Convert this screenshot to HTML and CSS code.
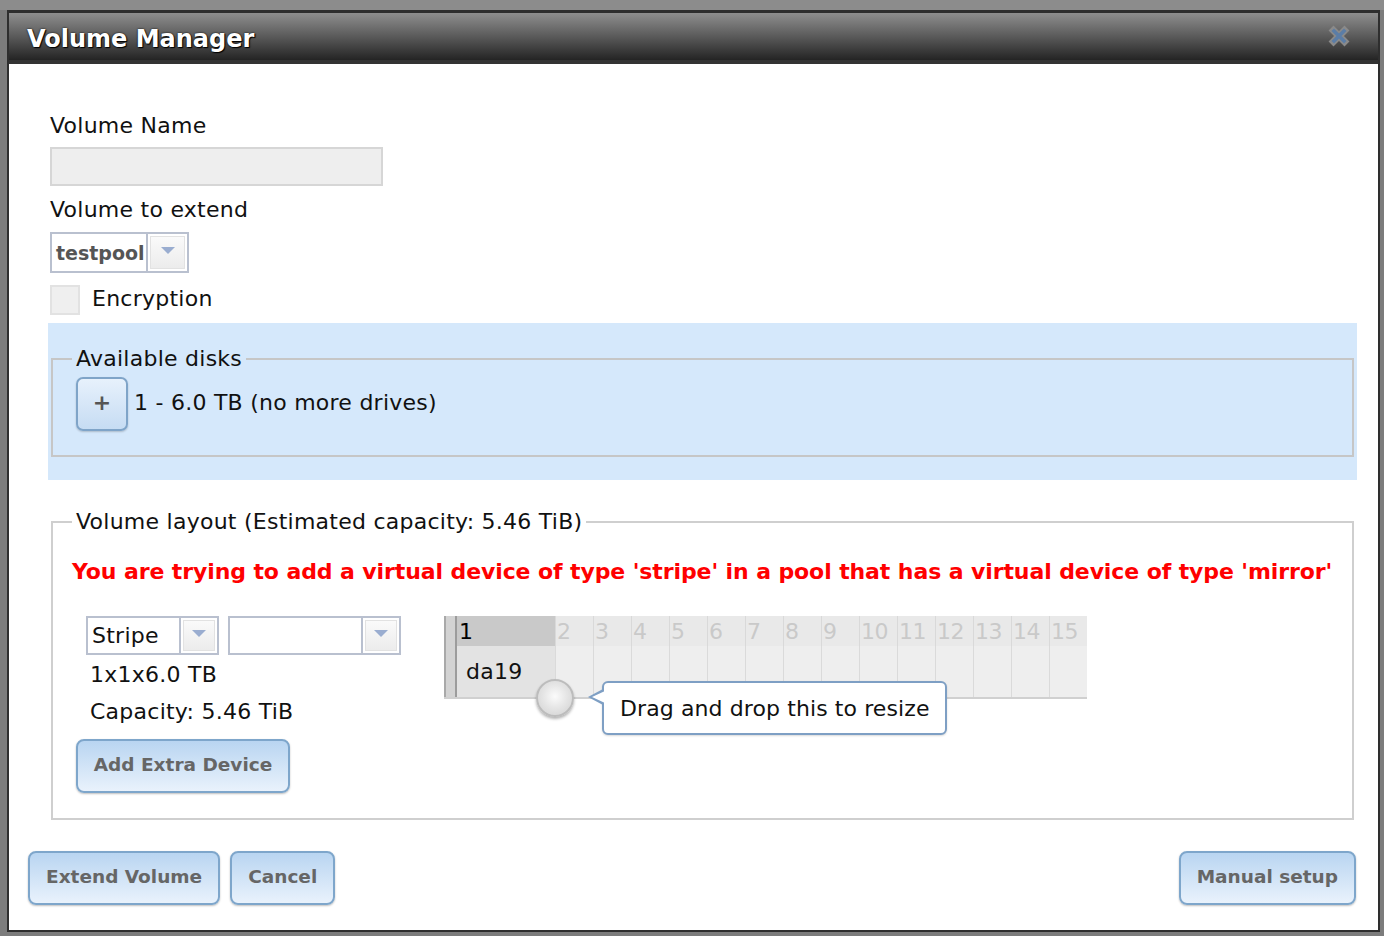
FILE: index.html
```html
<!DOCTYPE html>
<html>
<head>
<meta charset="utf-8">
<title>Volume Manager</title>
<link rel="stylesheet" href="styles.css">
</head>
<body>
<div class="backdrop">
  <div class="dialog">
    <div class="titlebar">
      <span class="title">Volume Manager</span>
      <svg class="close" width="22" height="22" viewBox="0 0 22 22">
        <path d="M5.5 5.5 L16.5 16.5 M16.5 5.5 L5.5 16.5" stroke="#8a8a8a" stroke-width="7" stroke-linecap="square"/>
        <path d="M6 6 L16 16 M16 6 L6 16" stroke="#5b7da6" stroke-width="3.5" stroke-linecap="square"/>
      </svg>
    </div>
    <div class="content">
      <div class="label first">Volume Name</div>
      <div class="textinput"></div>
      <div class="label">Volume to extend</div>
      <div class="select pool">
        <span class="sel-text bold">testpool</span>
        <span class="sel-arrow"><span class="arrow-box"><span class="tri"></span></span></span>
      </div>
      <div class="check-row">
        <span class="checkbox"></span>
        <span class="check-label">Encryption</span>
      </div>
    </div>

    <div class="disks-panel">
      <fieldset class="fs disks">
        <legend>Available disks</legend>
        <div class="disk-row">
          <span class="plus-btn">+</span>
          <span class="disk-text">1 - 6.0 TB (no more drives)</span>
        </div>
      </fieldset>
    </div>

    <div class="content">
      <fieldset class="fs layout">
        <legend>Volume layout (Estimated capacity: 5.46 TiB)</legend>
        <div class="warning">You are trying to add a virtual device of type 'stripe' in a pool that has a virtual device of type 'mirror'</div>
        <div class="layout-row">
          <div class="left-col">
            <div class="sel-pair">
              <div class="select stripe">
                <span class="sel-text">Stripe</span>
                <span class="sel-arrow"><span class="arrow-box"><span class="tri"></span></span></span>
              </div>
              <div class="select empty">
                <span class="sel-text"></span>
                <span class="sel-arrow"><span class="arrow-box"><span class="tri"></span></span></span>
              </div>
            </div>
            <div class="info">1x1x6.0 TB</div>
            <div class="info">Capacity: 5.46 TiB</div>
            <span class="btn extra">Add Extra Device</span>
          </div>
          <div class="grid-wrap">
            <div class="grid">
              <div class="grid-left"></div>
              <div class="grid-main">
                <div class="grid-head">
                  <span class="hc sel">1</span>
                  <span class="hc">2</span><span class="hc">3</span><span class="hc">4</span><span class="hc">5</span><span class="hc">6</span><span class="hc">7</span><span class="hc">8</span><span class="hc">9</span><span class="hc">10</span><span class="hc">11</span><span class="hc">12</span><span class="hc">13</span><span class="hc">14</span><span class="hc">15</span>
                </div>
                <div class="grid-body">
                  <span class="bc sel">da19</span>
                  <span class="bc"></span><span class="bc"></span><span class="bc"></span><span class="bc"></span><span class="bc"></span><span class="bc"></span><span class="bc"></span><span class="bc"></span><span class="bc"></span><span class="bc"></span><span class="bc"></span><span class="bc"></span><span class="bc"></span><span class="bc"></span>
                </div>
              </div>
            </div>
            <span class="knob"></span>
            <div class="tooltip">Drag and drop this to resize</div>
          </div>
        </div>
      </fieldset>
    </div>

    <div class="actions">
      <div class="actions-left">
        <span class="btn">Extend Volume</span>
        <span class="btn">Cancel</span>
      </div>
      <span class="btn">Manual setup</span>
    </div>
  </div>
</div>
</body>
</html>
```

FILE: styles.css
```css
html, body {
  margin: 0;
  padding: 0;
}
body {
  background: #7f7f7f;
  font-family: "DejaVu Sans", Verdana, sans-serif;
  font-size: 22px;
  letter-spacing: 0.25px;
  color: #111;
  width: 1384px;
  height: 936px;
  overflow: hidden;
}
.backdrop {
  padding: 10px 4px 0 7px;
  background: linear-gradient(#8c8c8c 0, #8c8c8c 10px, #7c7c7c 10px);
  height: 936px;
  box-sizing: border-box;
}
.dialog {
  width: 1373px;
  height: 922px;
  box-sizing: border-box;
  border: 2px solid #2e2e2e;
  border-top-width: 3px;
  background: #fff;
}
.titlebar {
  border-bottom: 4px solid #333;
  background: linear-gradient(#8e8e8e, #5a5a5a 50%, #242424);
  display: flex;
  align-items: center;
  justify-content: space-between;
  padding: 4px 28px 0 18px;
  box-sizing: border-box;
  height: 51px;
}
.title {
  color: #fff;
  font-weight: bold;
  font-size: 24px;
  letter-spacing: 0;
  text-shadow: 0 0 2px #000, 1px 1px 1px #000;
}
.close {
  display: block;
  margin-top: -6px;
}
.content {
  padding: 0 22px 0 39px;
}
.label {
  line-height: 28px;
  padding-left: 2px;
}
.label.first {
  margin-top: 48px;
}
.textinput {
  margin: 7px 0 10px 2px;
  width: 329px;
  height: 35px;
  background: #eee;
  border: 2px solid #d6d6d6;
}
.select {
  display: flex;
  border: 2px solid #b9c0cf;
  background: #fff;
  box-sizing: border-box;
}
.select.pool {
  margin: 8px 0 0 2px;
  width: 139px;
  height: 41px;
}
.sel-text {
  flex: 1;
  display: flex;
  align-items: center;
  padding-left: 4px;
  color: #111;
}
.sel-text.bold {
  font-weight: bold;
  color: #555;
  font-size: 19px;
  letter-spacing: 0;
}
.sel-arrow {
  border-left: 2px solid #b9c0cf;
  width: 38px;
  padding: 2px;
  box-sizing: border-box;
  display: flex;
}
.pool .sel-arrow {
  width: 41px;
}
.arrow-box {
  flex: 1;
  background: linear-gradient(#fafafa, #ececec);
  border: 1px solid #e2e2e2;
  display: flex;
  align-items: center;
  justify-content: center;
}
.tri {
  width: 0;
  height: 0;
  border-left: 7px solid transparent;
  border-right: 7px solid transparent;
  border-top: 7px solid #9aadd0;
  margin-top: -4px;
}
.check-row {
  display: flex;
  align-items: center;
  margin: 12px 0 8px 2px;
}
.checkbox {
  width: 26px;
  height: 26px;
  background: #efefef;
  border: 2px solid #e2e2e2;
}
.check-label {
  margin-left: 12px;
  margin-top: -4px;
}
.disks-panel {
  margin: 0 21px 0 39px;
  background: #d5e8fb;
  padding: 22px 1px 21px 1px;
  height: 157px;
  box-sizing: border-box;
}
.fs {
  margin: 0;
  border: 2px solid #c6c6c6;
  padding: 0 19px 0 19px;
  min-width: 0;
}
.fs legend {
  padding: 0 4px;
  line-height: 28px;
}
.disks {
  margin-left: 2px;
  margin-right: 2px;
  padding-bottom: 24px;
}
.disk-row {
  display: flex;
  align-items: center;
  margin-top: 4px;
}
.plus-btn {
  margin-left: 4px;
  width: 52px;
  height: 54px;
  box-sizing: border-box;
  border: 2px solid #7fa4c8;
  border-radius: 7px;
  background: linear-gradient(#e7f1fc, #c6dcf3);
  display: flex;
  align-items: center;
  justify-content: center;
  padding-bottom: 3px;
  color: #555;
  font-size: 22px;
  font-weight: bold;
  box-shadow: 0 1px 2px rgba(0,0,0,0.2);
}
.disk-text {
  margin-left: 6px;
  margin-top: -3px;
}
.layout {
  margin: 28px 2px 0 3px;
  padding-bottom: 25px;
  border-color: #cfcfcf;
}
.warning {
  color: #f00;
  font-weight: bold;
  font-size: 22px;
  letter-spacing: -0.1px;
  line-height: 28px;
  margin-top: 22px;
  white-space: nowrap;
}
.layout-row {
  display: flex;
  margin-top: 30px;
}
.left-col {
  margin-left: 4px;
  width: 368px;
}
.sel-pair {
  display: flex;
  gap: 9px;
  margin-left: 10px;
}
.select.stripe {
  width: 133px;
  height: 39px;
}
.select.empty {
  width: 173px;
  height: 39px;
}
.info {
  line-height: 28px;
  padding-left: 14px;
  margin-top: 6px;
}
.info + .info {
  margin-top: 9px;
}
.btn {
  display: inline-flex;
  align-items: center;
  justify-content: center;
  height: 54px;
  box-sizing: border-box;
  padding: 0 16px 3px;
  border: 2px solid #7ea6cb;
  border-radius: 8px;
  background: linear-gradient(#b9d5f1, #e9f2fc);
  color: #666;
  font-weight: bold;
  font-size: 18.5px;
  letter-spacing: 0;
  box-shadow: 0 1px 2px rgba(0,0,0,0.25);
}
.btn.extra {
  margin-top: 13px;
  width: 214px;
  padding: 0 0 3px;
}
.grid-wrap {
  position: relative;
}
.grid {
  display: flex;
  border-bottom: 2px solid #d0d0d0;
}
.grid-left {
  background: #d3d3d3;
  border-left: 2px solid #a9a9a9;
  border-right: 2px solid #9c9c9c;
  width: 9px;
}
.grid-main {
  display: flex;
  flex-direction: column;
}
.grid-head, .grid-body {
  display: flex;
}
.hc {
  width: 38px;
  height: 30px;
  box-sizing: border-box;
  background: #e9e9e9;
  border-left: 1px solid #d9d9d9;
  color: #c9c9c9;
  line-height: 32px;
  padding-left: 1px;
  letter-spacing: -0.5px;
}
.hc.sel {
  width: 98px;
  background: #c9c9c9;
  color: #000;
  border-left: none;
  padding-left: 2px;
}
.bc {
  width: 38px;
  height: 51px;
  box-sizing: border-box;
  background: #eee;
  border-left: 1px solid #dadada;
}
.bc.sel {
  width: 98px;
  background: #e3e3e3;
  border-left: none;
  padding-left: 9px;
  line-height: 52px;
}
.knob {
  position: absolute;
  left: 92px;
  top: 63px;
  width: 34px;
  height: 34px;
  border-radius: 50%;
  border: 2px solid #bcbcbc;
  background: radial-gradient(circle at 50% 45%, #fbfbfb 0, #e6e6e6 45%, #cfcfcf 100%);
  box-shadow: 0 2px 3px rgba(0,0,0,0.3);
}
.tooltip {
  position: absolute;
  left: 158px;
  top: 65px;
  width: 345px;
  height: 54px;
  box-sizing: border-box;
  border: 2px solid #7e9fc4;
  border-radius: 6px;
  background: #fff;
  display: flex;
  align-items: center;
  padding-left: 16px;
  white-space: nowrap;
  letter-spacing: 0.1px;
  box-shadow: 0 1px 2px rgba(0,0,0,0.15);
}
.tooltip::before {
  content: "";
  position: absolute;
  left: -16px;
  top: 6px;
  border-top: 8px solid transparent;
  border-bottom: 8px solid transparent;
  border-right: 15px solid #7e9fc4;
}
.tooltip::after {
  content: "";
  position: absolute;
  left: -12px;
  top: 8px;
  border-top: 6px solid transparent;
  border-bottom: 6px solid transparent;
  border-right: 13px solid #fff;
}
.actions {
  display: flex;
  justify-content: space-between;
  padding: 0 22px 0 19px;
  margin-top: 31px;
}
.actions-left {
  display: flex;
  gap: 10px;
}
```
